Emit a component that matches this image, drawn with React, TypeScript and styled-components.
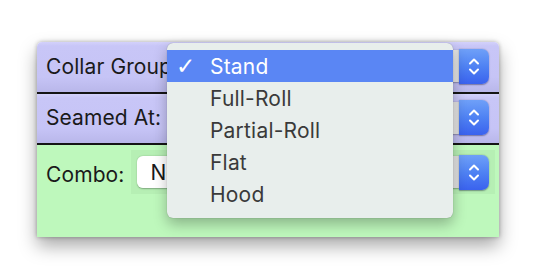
import React from "react";
import styled, { createGlobalStyle } from "styled-components";

const Global = createGlobalStyle`
  html, body { margin: 0; padding: 0; background: #ffffff; }
  body { font-family: Inter, "Liberation Sans", Arial, sans-serif; }
`;

const Page = styled.div`
  width: 537px;
  height: 280px;
  padding: 42px 0 0 37px;
  box-sizing: border-box;
  overflow: hidden;
`;

const Window = styled.div`
  position: relative;
  width: 462px;
  display: flex;
  flex-direction: column;
  border-radius: 5px 5px 0 0;
  box-shadow: 0 9px 18px rgba(0, 0, 0, 0.34), 0 0 4px rgba(0, 0, 0, 0.3);
`;

const Row = styled.div<{ $tone: "purple" | "green"; $h: number; $top?: boolean }>`
  height: ${(p) => p.$h}px;
  display: flex;
  align-items: ${(p) => (p.$tone === "green" ? "flex-start" : "center")};
  padding: ${(p) => (p.$tone === "green" ? "5px 4px 0 9px" : "0 10px 2px 9px")};
  box-sizing: border-box;
  border-radius: ${(p) => (p.$top ? "5px 5px 0 0" : "0")};
  background: ${(p) =>
    p.$tone === "purple"
      ? "linear-gradient(to bottom, #d3d1fb 0px, #c8c6f7 4px, #c6c4f6 70%, #b9b7ea 100%)"
      : "#bef8bc"};
`;

const Separator = styled.div`
  height: 2px;
  background: #151515;
`;

const Label = styled.span<{ $offset?: number }>`
  font-size: 21px;
  color: #1a1a1a;
  white-space: nowrap;
  letter-spacing: 0.1px;
  margin-top: ${(p) => p.$offset ?? 0}px;
`;

const Well = styled.div`
  flex: 1;
  display: flex;
  align-items: center;
  padding: 6px;
  margin-left: 7px;
  background: #b6efb4;
`;

const Popup = styled.div<{ $grow?: boolean }>`
  flex: 1;
  display: flex;
  align-items: center;
  height: 32px;
  margin-left: ${(p) => (p.$grow ? "0" : "20px")};
`;

const PopupBody = styled.div`
  flex: 1;
  height: 32px;
  display: flex;
  align-items: center;
  padding-left: 13px;
  background: linear-gradient(to right, #ffffff 0%, #ffffff 94%, #dcdcdc 100%);
  border-radius: 6px 0 0 6px;
  box-shadow: 0 0.5px 1.5px rgba(0, 0, 0, 0.3);
  font-size: 21px;
  color: #1a1a1a;
`;

const Stepper = styled.div`
  width: 30px;
  height: 35px;
  display: flex;
  align-items: center;
  justify-content: center;
  border-radius: 0 7px 7px 0;
  background: linear-gradient(to bottom, #6fa0f8 0%, #4f82f3 50%, #3a62ee 100%);
  box-shadow: 0 0.5px 1.5px rgba(0, 0, 40, 0.4);
`;

const Menu = styled.div`
  position: absolute;
  left: 130px;
  top: 1px;
  width: 286px;
  padding: 7px 0 8px;
  background: #e8eeec;
  border-radius: 6px;
  box-shadow: 0 6px 14px rgba(0, 0, 0, 0.28), 0 0 1px rgba(0, 0, 0, 0.35);
  display: flex;
  flex-direction: column;
`;

const Item = styled.div<{ $active?: boolean }>`
  height: 32px;
  display: flex;
  align-items: center;
  font-size: 21px;
  letter-spacing: 0.2px;
  color: ${(p) => (p.$active ? "#ffffff" : "#3a3a3a")};
  background: ${(p) => (p.$active ? "#5a86f4" : "transparent")};
`;

const Check = styled.span`
  width: 43px;
  padding-left: 9px;
  box-sizing: border-box;
  font-size: 23px;
  font-weight: 700;
  font-family: "DejaVu Sans", sans-serif;
`;

const Chevrons = () => (
  <svg width="12" height="19" viewBox="0 0 12 19" fill="none">
    <path d="M2 6.5 L6 2.5 L10 6.5" stroke="#ffffff" strokeWidth="2" strokeLinecap="round" strokeLinejoin="round" />
    <path d="M2 12.5 L6 16.5 L10 12.5" stroke="#ffffff" strokeWidth="2" strokeLinecap="round" strokeLinejoin="round" />
  </svg>
);

const items = ["Stand", "Full-Roll", "Partial-Roll", "Flat", "Hood"];

export default function App() {
  return (
    <>
      <Global />
      <Page>
        <Window>
          <Row $tone="purple" $h={50} $top>
            <Label>Collar Group:</Label>
            <Popup>
              <PopupBody />
              <Stepper>
                <Chevrons />
              </Stepper>
            </Popup>
          </Row>
          <Separator />
          <Row $tone="purple" $h={49}>
            <Label>Seamed At:</Label>
            <Popup>
              <PopupBody />
              <Stepper>
                <Chevrons />
              </Stepper>
            </Popup>
          </Row>
          <Separator />
          <Row $tone="green" $h={92}>
            <Label $offset={12}>Combo:</Label>
            <Well>
              <Popup $grow>
                <PopupBody>None</PopupBody>
                <Stepper>
                  <Chevrons />
                </Stepper>
              </Popup>
            </Well>
          </Row>
          <Menu>
            {items.map((it, i) => (
              <Item key={it} $active={i === 0}>
                <Check>{i === 0 ? "✓" : ""}</Check>
                {it}
              </Item>
            ))}
          </Menu>
        </Window>
      </Page>
    </>
  );
}
